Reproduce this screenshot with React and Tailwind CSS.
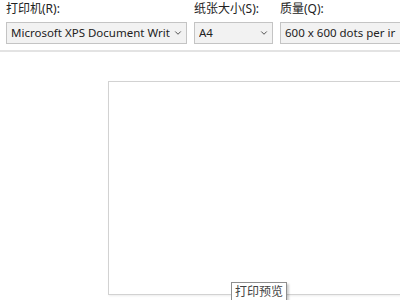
import { ChevronDown } from "lucide-react";

function Select({ value, className }) {
    return (
        <div className={`flex h-[22px] items-center border border-[#c4c4c4] bg-[#f2f2f2] pl-[4px] pr-[3px] ${className}`}>
            <span className="min-w-0 flex-1 overflow-hidden whitespace-nowrap text-[11.5px]">{value}</span>
            <ChevronDown size={10} strokeWidth={2.2} className="ml-[3px] shrink-0 text-[#444]" />
        </div>
    );
}

export default function App() {
    return (
        <div className="relative h-[300px] w-[400px] overflow-hidden bg-white font-['Noto_Sans','Noto_Sans_CJK_SC',sans-serif] text-[12px] leading-none text-[#222]">
            <div className="flex gap-[7px] pl-[6px] pt-[3px]">
                <div className="flex w-[181px] shrink-0 flex-col gap-[5px]">
                    <span className="h-[14px]">打印机(R):</span>
                    <Select value="Microsoft XPS Document Writer" />
                </div>
                <div className="flex w-[79px] shrink-0 flex-col gap-[5px]">
                    <span className="h-[14px]">纸张大小(S):</span>
                    <Select value="A4" />
                </div>
                <div className="flex w-[140px] shrink-0 flex-col gap-[5px]">
                    <span className="h-[14px]">质量(Q):</span>
                    <div className="flex h-[22px] w-[160px] items-center border border-[#c4c4c4] bg-[#f2f2f2] pl-[4px]">
                        <span className="whitespace-nowrap text-[11.5px]">600 x 600 dots per ir</span>
                    </div>
                </div>
            </div>
            <div className="mt-[6px] h-[2px] bg-[#e3e3e3]" />
            <div className="pl-[108px] pt-[29px]">
                <div className="h-[214px] w-[300px] border border-[#d2d2d2] bg-white shadow-[1px_1px_2px_rgba(0,0,0,0.08)]" />
            </div>
            <div className="absolute left-[231px] top-[282px] border border-[#8f8f8f] bg-white px-[3px] pb-[4px] pt-[3px] text-[12px] text-[#444] shadow-[2px_2px_2px_rgba(0,0,0,0.2)]">
                打印预览
            </div>
        </div>
    );
}
